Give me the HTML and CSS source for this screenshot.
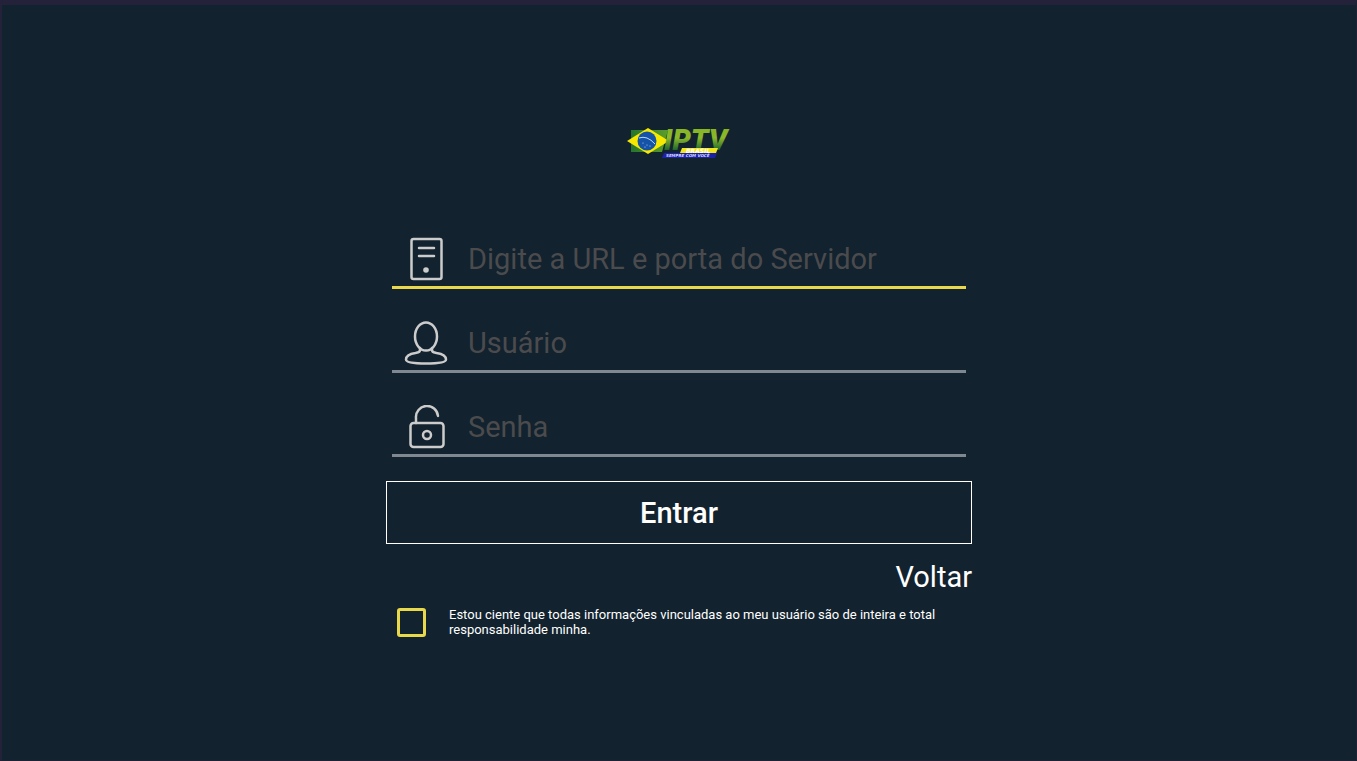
FILE: index.html
```
<!DOCTYPE html>
<html lang="pt-BR">
<head>
    <meta charset="UTF-8">
    <meta name="viewport" content="width=device-width, initial-scale=1.0">
    <title>IPTV Brasil</title>
    <link rel="stylesheet" href="styles.css">
</head>
<body>
    <main class="login">
        <svg class="logo" viewBox="0 0 104 34" role="img" aria-label="IPTV Brasil">
            <defs>
                <linearGradient id="green" gradientUnits="userSpaceOnUse" x1="0" y1="3" x2="0" y2="25">
                    <stop offset="0" stop-color="#86b526"/>
                    <stop offset="0.4" stop-color="#8cb82a"/>
                    <stop offset="1" stop-color="#17602c"/>
                </linearGradient>
                <linearGradient id="flag" x1="0" y1="0" x2="1" y2="0">
                    <stop offset="0" stop-color="#25752c"/>
                    <stop offset="1" stop-color="#5c9c2a"/>
                </linearGradient>
            </defs>
            <path d="M4 4h37l-6 22H4z" fill="url(#flag)"/>
            <path d="M0 15 21 2l21 13-21 13z" fill="#f6e800"/>
            <circle cx="20" cy="15" r="9.500" fill="#1553a8"/>
            <path d="M12 12q8-3 16 6" fill="none" stroke="#b9dcf5"/>
            <g fill="#d8ebff">
                <circle cx="16" cy="17" r="0.5"/>
                <circle cx="20" cy="19" r="0.5"/>
                <circle cx="23" cy="20" r="0.5"/>
                <circle cx="18" cy="21" r="0.5"/>
            </g>
            <text class="logo-name" x="37" y="24" fill="url(#green)">IPTV</text>
            <path d="M55 22h36l-2 5H53z" fill="#f2e61c"/>
            <text class="logo-country" x="59" y="27">BRASIL</text>
            <path d="M37 27h53l-2 5H35z" fill="#1c22a8"/>
            <text class="logo-slogan" x="39" y="31">SEMPRE COM VOCÊ</text>
        </svg>

        <form class="login-form">
            <div class="field field-active">
                <label for="server" aria-label="Servidor">
                    <svg class="icon" viewBox="0 0 44 44">
                        <rect x="7.500" y="2" width="30" height="40" rx="2"/>
                        <path d="M15 11h15M15 19h15"/>
                        <circle class="dot" cx="22" cy="33" r="2.800"/>
                    </svg>
                </label>
                <input type="text" id="server" name="server" placeholder="Digite a URL e porta do Servidor">
            </div>
            <div class="field">
                <label for="user" aria-label="Usuário">
                    <svg class="icon" viewBox="0 0 44 44">
                        <ellipse cx="22" cy="15.500" rx="11" ry="14"/>
                        <path d="M16 27v2c0 2.500-2 2.500-4.500 3C5 33 2 35 2 38.500C2 41.500 9 42.500 22 42.500S42 41.500 42 38.500C42 35 39 33 32.500 32C30 31.500 28 31.500 28 29V27"/>
                    </svg>
                </label>
                <input type="text" id="user" name="user" placeholder="Usuário">
            </div>
            <div class="field">
                <label for="password" aria-label="Senha">
                    <svg class="icon" viewBox="0 0 44 44">
                        <rect x="6.500" y="18" width="33" height="24" rx="3"/>
                        <path d="M12 18v-5a11 11 0 0 1 22-2"/>
                        <circle cx="23" cy="30" r="4"/>
                    </svg>
                </label>
                <input type="password" id="password" name="password" placeholder="Senha">
            </div>

            <button type="submit" class="enter">Entrar</button>
            <a href="#" class="back">Voltar</a>

            <div class="terms">
                <input type="checkbox" id="terms" name="terms">
                <label for="terms">Estou ciente que todas informações vinculadas ao meu usuário são de inteira e total responsabilidade minha.</label>
            </div>
        </form>
    </main>
</body>
</html>
```
FILE: styles.css
```
* {
    box-sizing: border-box;
}

body {
    margin: 0;
    padding-bottom: 2px;
    min-height: 100vh;
    display: flex;
    justify-content: center;
    align-items: center;
    background-color: #12222e;
    border: 1px solid #1c2233;
    border-top: 5px solid #23223a;
    border-left: 2px solid #23223a;
    color: #ffffff;
    font-family: Roboto, sans-serif;
}

.login {
    width: 100%;
    max-width: 586px;
    display: flex;
    flex-direction: column;
    align-items: center;
}

.logo {
    width: 104px;
    height: 34px;
    margin-bottom: 69px;
    overflow: visible;
}

.logo-name {
    font-size: 29px;
    font-weight: 900;
    font-style: italic;
}

.logo-country {
    font-family: "DejaVu Sans", sans-serif;
    font-size: 6px;
    font-weight: 700;
    font-style: italic;
    fill: #ffffff;
}

.logo-slogan {
    font-family: "DejaVu Sans", sans-serif;
    font-size: 4px;
    font-weight: 700;
    font-style: italic;
    fill: #d5d8ff;
}

.login-form {
    width: 100%;
    display: flex;
    flex-direction: column;
}

.field {
    display: flex;
    align-items: center;
    gap: 20px;
    height: 60px;
    margin: 0 6px 24px;
    padding: 2px 0 0 12px;
    border-bottom: 3px solid #7f8790;
}

.field-active {
    border-bottom-color: #e8d84a;
}

.field label {
    display: flex;
}

.icon {
    width: 44px;
    height: 44px;
    fill: none;
    stroke: #cccccc;
    stroke-width: 2.5px;
    stroke-linecap: round;
    stroke-linejoin: round;
}

.icon .dot {
    fill: #cccccc;
    stroke: none;
}

.field input {
    flex: 1;
    min-width: 0;
    padding: 0;
    border: none;
    outline: none;
    background: none;
    color: #ffffff;
    font-family: inherit;
    font-size: 29px;
}

.field input::placeholder {
    color: #4b4b4d;
    opacity: 1;
}

.enter {
    height: 63px;
    border: 1px solid #ffffff;
    background: none;
    color: #ffffff;
    font-family: inherit;
    font-size: 29px;
    font-weight: 500;
    cursor: pointer;
}

.back {
    align-self: flex-end;
    margin-top: 16px;
    color: #ffffff;
    font-size: 29px;
    line-height: 34px;
    text-decoration: none;
}

.terms {
    display: flex;
    align-items: center;
    gap: 23px;
    margin-top: 13px;
    padding: 0 24px 0 11px;
}

.terms input {
    appearance: none;
    flex: none;
    width: 29px;
    height: 29px;
    margin: 0;
    border: 3px solid #e8d84a;
    border-radius: 3px;
}

.terms input:checked {
    background-color: #e8d84a;
}

.terms label {
    font-size: 13px;
    line-height: 15px;
}
```
